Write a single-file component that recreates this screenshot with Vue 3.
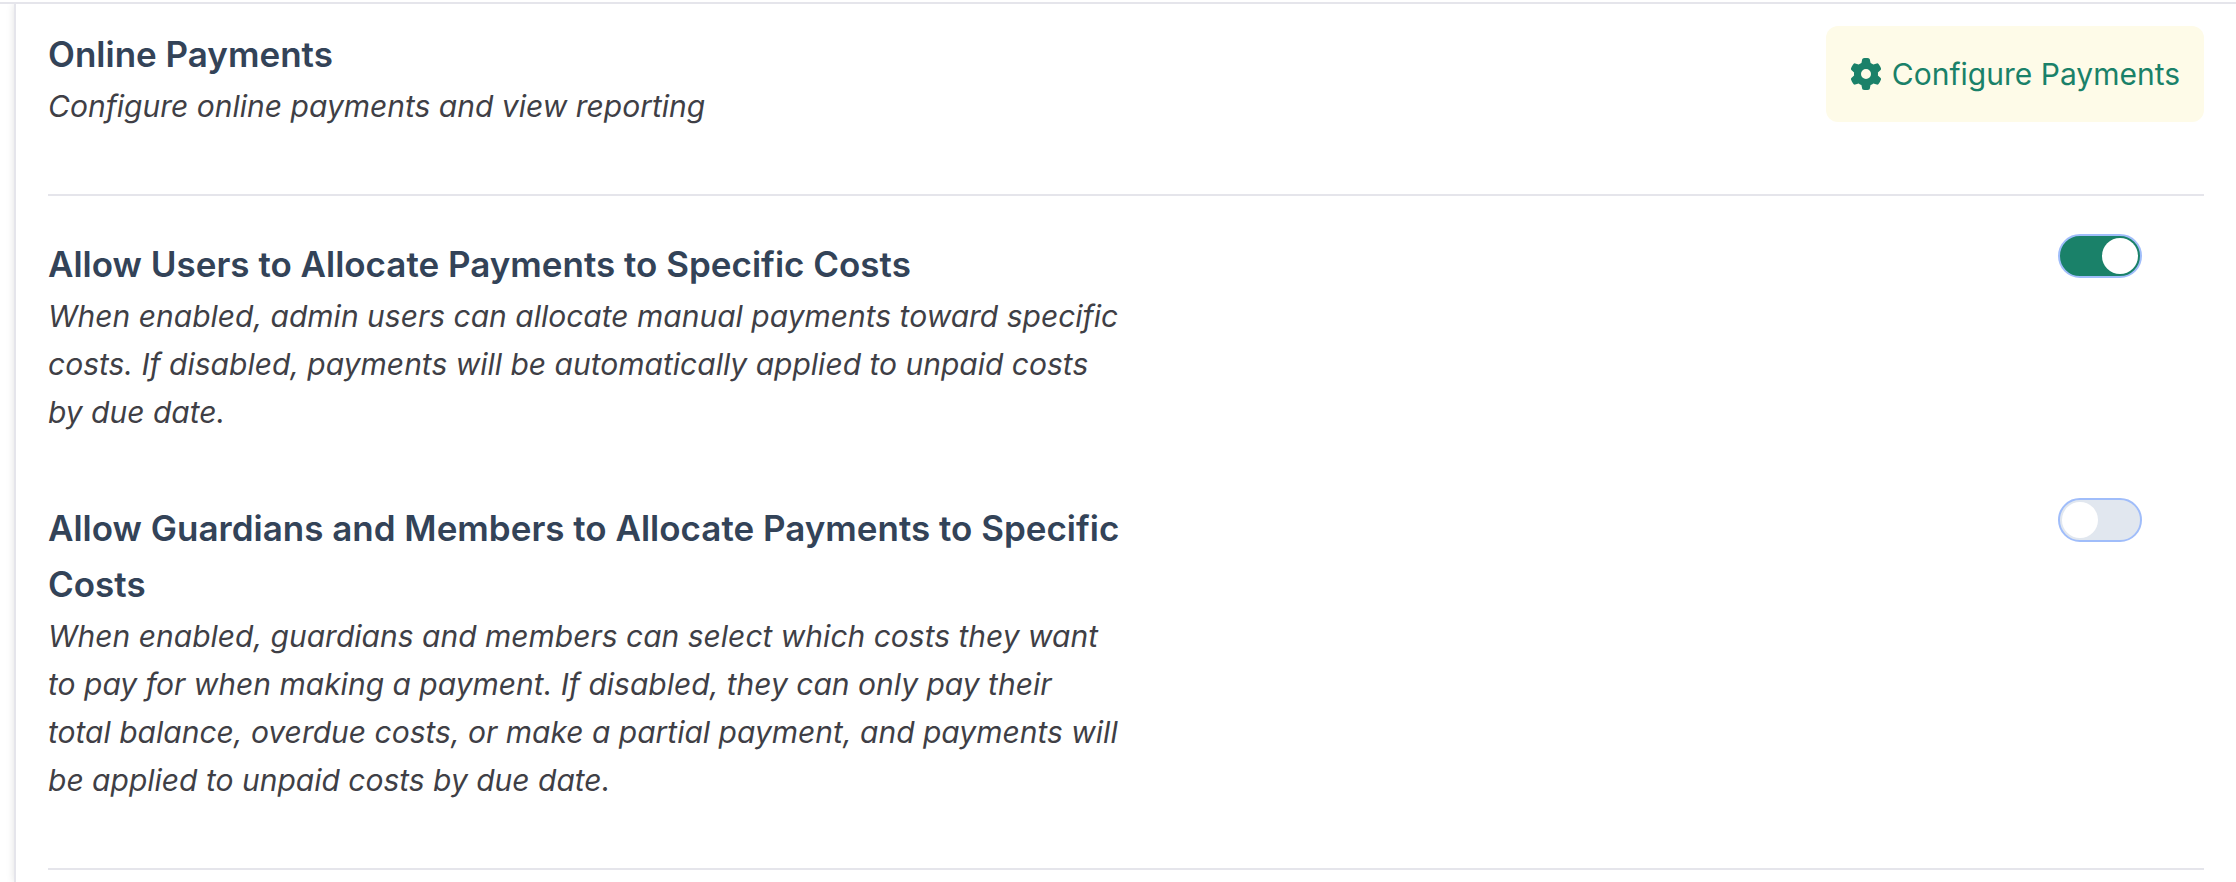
<script setup>
import { reactive } from 'vue'

const settings = reactive([
  {
    id: 'allocate-users',
    title: 'Allow Users to Allocate Payments to Specific Costs',
    text: 'When enabled, admin users can allocate manual payments toward specific costs. If disabled, payments will be automatically applied to unpaid costs by due date.',
    enabled: true
  },
  {
    id: 'allocate-guardians',
    title: 'Allow Guardians and Members to Allocate Payments to Specific Costs',
    text: 'When enabled, guardians and members can select which costs they want to pay for when making a payment. If disabled, they can only pay their total balance, overdue costs, or make a partial payment, and payments will be applied to unpaid costs by due date.',
    enabled: false
  }
])
</script>

<template>
  <div class="page">
    <div class="frame">
      <main class="panel">
        <section class="intro">
          <div class="copy">
            <h2>Online Payments</h2>
            <p>Configure online payments and view reporting</p>
          </div>
          <button type="button" class="configure">
            <svg viewBox="0 0 512 512" aria-hidden="true">
              <path fill="currentColor" d="M495.9 166.6c3.2 8.7 .5 18.4-6.4 24.6l-43.3 39.4c1.1 8.3 1.7 16.8 1.7 25.4s-.6 17.1-1.7 25.4l43.3 39.4c6.9 6.2 9.6 15.9 6.4 24.6c-4.4 11.9-9.7 23.3-15.8 34.3l-4.7 8.1c-6.6 11-14 21.4-22.1 31.2c-5.9 7.2-15.7 9.6-24.5 6.8l-55.7-17.7c-13.4 10.3-28.2 18.9-44 25.4l-12.5 57.1c-2 9.1-9 16.3-18.2 17.8c-13.8 2.3-28 3.5-42.5 3.5s-28.7-1.2-42.5-3.5c-9.2-1.5-16.2-8.7-18.2-17.8l-12.5-57.1c-15.8-6.5-30.6-15.1-44-25.4L83.1 425.9c-8.8 2.8-18.6 .3-24.5-6.8c-8.1-9.8-15.5-20.2-22.1-31.2l-4.7-8.1c-6.1-11-11.4-22.4-15.8-34.3c-3.2-8.7-.5-18.4 6.4-24.6l43.3-39.4C64.6 273.1 64 264.6 64 256s.6-17.1 1.7-25.4L22.4 191.2c-6.9-6.2-9.6-15.9-6.4-24.6c4.4-11.9 9.7-23.3 15.8-34.3l4.7-8.1c6.6-11 14-21.4 22.1-31.2c5.9-7.2 15.7-9.6 24.5-6.8l55.7 17.7c13.4-10.3 28.2-18.9 44-25.4l12.5-57.1c2-9.1 9-16.3 18.2-17.8C227.3 1.2 241.5 0 256 0s28.7 1.2 42.5 3.5c9.2 1.5 16.2 8.7 18.2 17.8l12.5 57.1c15.8 6.5 30.6 15.1 44 25.4l55.7-17.7c8.8-2.8 18.6-.3 24.5 6.8c8.1 9.8 15.5 20.2 22.1 31.2l4.7 8.1c6.1 11 11.4 22.4 15.8 34.3zM256 336a80 80 0 1 0 0-160 80 80 0 1 0 0 160z" />
            </svg>
            <span>Configure Payments</span>
          </button>
        </section>

        <section class="settings">
          <div v-for="item in settings" :key="item.id" class="setting">
            <div class="copy">
              <h2><label :for="item.id">{{ item.title }}</label></h2>
              <p :id="item.id + '-text'">{{ item.text }}</p>
            </div>
            <input
              :id="item.id"
              v-model="item.enabled"
              class="toggle"
              type="checkbox"
              role="switch"
              :aria-describedby="item.id + '-text'"
            />
          </div>
        </section>
      </main>
    </div>
  </div>
</template>

<style>
body {
  margin: 0;
  background: #fff;
}
</style>

<style scoped>
.page {
  box-sizing: border-box;
  display: flex;
  min-height: 100vh;
  padding-top: 2px;
  font-family: Inter, "Liberation Sans", sans-serif;
}

.frame {
  flex: 1;
  display: flex;
  padding-left: 14px;
  border-top: 2px solid #e5e5eb;
  overflow: hidden;
}

.panel {
  flex: 1;
  padding: 22px 32px 10px;
  border-left: 2px solid #e5e5eb;
  background: #fff;
  box-shadow: 0 0 8px rgba(0, 0, 0, 0.12);
}

.intro,
.setting {
  display: flex;
  align-items: flex-start;
  justify-content: space-between;
}

.intro {
  padding-bottom: 64px;
  border-bottom: 2px solid #e5e5eb;
}

.settings {
  display: grid;
  gap: 62px;
  padding: 38px 0 64px;
  border-bottom: 2px solid #e5e5eb;
}

.copy {
  width: 50%;
}

.setting .copy {
  padding-top: 2px;
}

h2 {
  margin: 0;
  color: #334358;
  font-size: 35px;
  font-weight: 600;
  line-height: 56px;
}

p {
  margin: 0;
  padding-right: 6px;
  color: #3f3f46;
  font-size: 30px;
  font-style: italic;
  line-height: 48px;
}

.configure {
  display: flex;
  align-items: center;
  gap: 10px;
  padding: 24px;
  border: 0;
  border-radius: 12px;
  background: #fefbe8;
  color: #1a8169;
  font-family: inherit;
  font-size: 30px;
  line-height: 48px;
  cursor: pointer;
}

.configure svg {
  width: 32px;
  height: 32px;
}

.toggle {
  flex: none;
  box-sizing: border-box;
  display: flex;
  width: 84px;
  height: 44px;
  margin: 0 62px 0 0;
  padding: 2px;
  border: 2px solid #a0bdfa;
  border-radius: 22px;
  background: #e1e7ef;
  appearance: none;
  cursor: pointer;
}

.toggle::before {
  content: "";
  width: 36px;
  height: 36px;
  border-radius: 50%;
  background: #fff;
}

.toggle:checked {
  justify-content: flex-end;
  background: #1a8169;
}
</style>
